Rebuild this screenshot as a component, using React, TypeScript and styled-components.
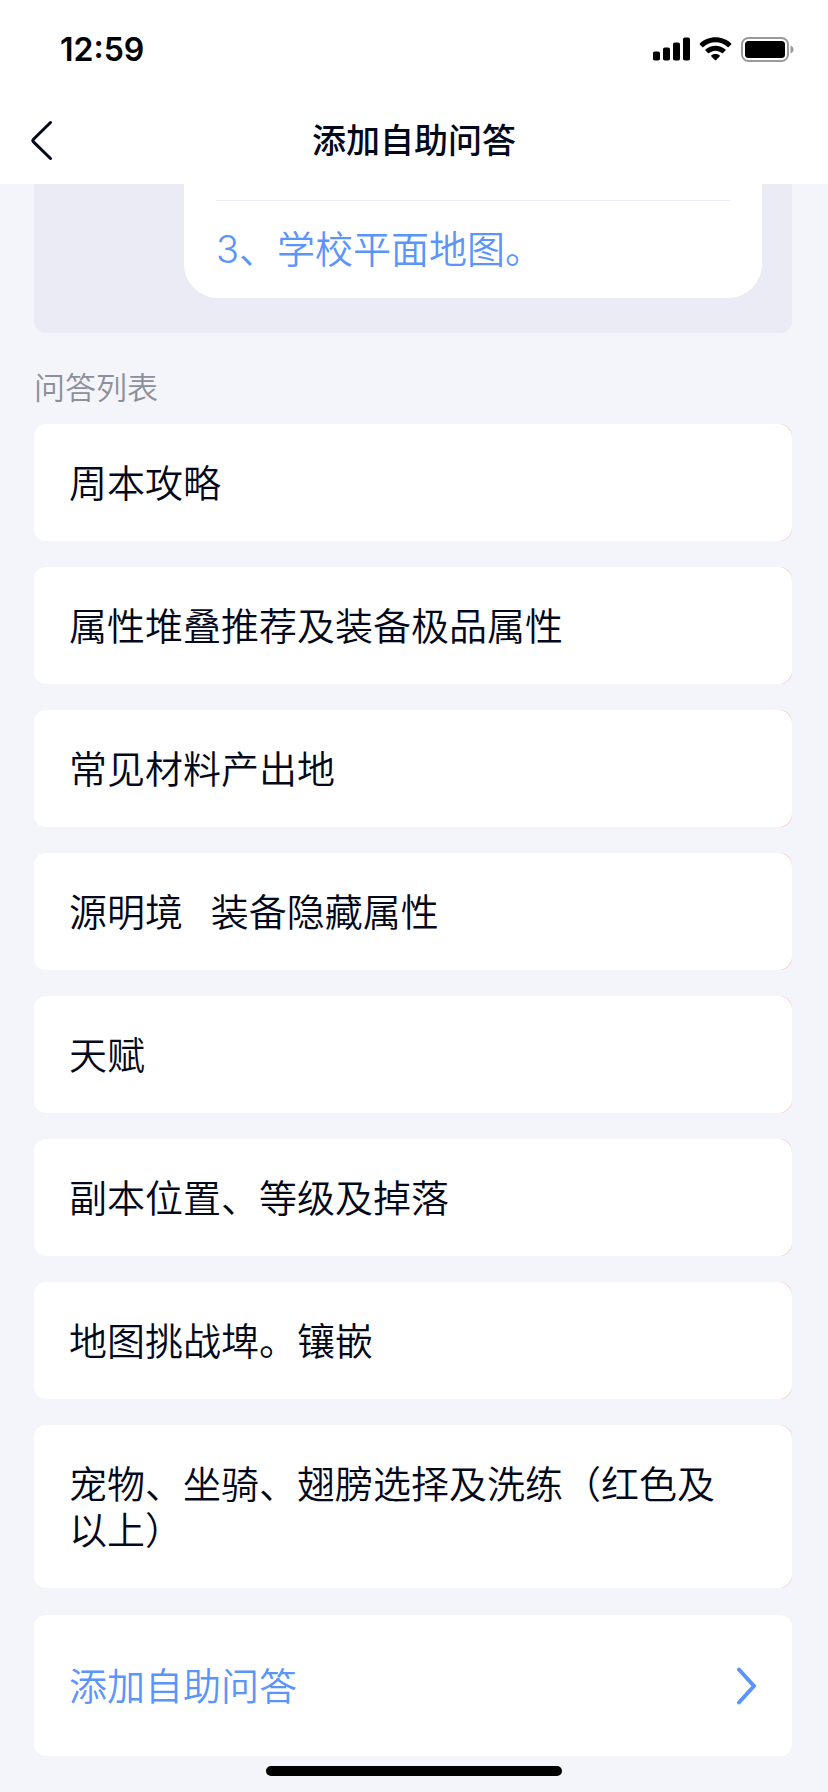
import React from "react";
import styled, { createGlobalStyle } from "styled-components";

const color = {
  page: "#f4f5fa",
  panel: "#ebebf5",
  surface: "#ffffff",
  text: "#03081a",
  muted: "#8c8f9c",
  link: "#5b95fc",
  danger: "#fbc9ce",
};

const cjk = `"Noto Sans CJK SC", sans-serif`;

const GlobalStyle = createGlobalStyle`
  *, *::before, *::after { box-sizing: border-box; }
  body {
    margin: 0;
    background: ${color.page};
    color: ${color.text};
    font-family: Inter, ${cjk};
    font-weight: 350;
  }
  button { border: 0; padding: 0; background: none; color: inherit; font: inherit; cursor: pointer; }
`;

const Page = styled.div`
  display: flex;
  flex-direction: column;
  min-height: 100vh;
`;

const Header = styled.header`
  position: sticky;
  top: 0;
  z-index: 1;
  background: ${color.surface};
`;

const StatusBar = styled.div`
  display: flex;
  align-items: center;
  justify-content: space-between;
  height: 98px;
  padding: 0 34px 0 60px;
`;

const Clock = styled.time`
  padding-top: 2px;
  font-size: 32px;
  line-height: 40px;
  font-weight: 600;
  color: #000;
`;

const StatusIcons = styled.div`
  display: flex;
  align-items: center;
  gap: 9px;
`;

const NavBar = styled.div`
  display: grid;
  grid-template-columns: 86px 1fr 86px;
  align-items: center;
  height: 86px;
`;

const BackButton = styled.button`
  display: flex;
  align-items: center;
  height: 84px;
  padding-left: 30px;
`;

const Title = styled.h1`
  margin: 0;
  font-size: 34px;
  line-height: 46px;
  font-weight: 500;
  text-align: center;
`;

const Content = styled.main`
  flex: 1;
  padding: 0 36px 36px 34px;
`;

const Preview = styled.section`
  padding: 0 30px 35px 150px;
  border-radius: 0 0 12px 12px;
  background: ${color.panel};
`;

const Bubble = styled.div`
  padding: 16px 32px 26px;
  border-radius: 0 0 34px 34px;
  background: ${color.surface};
`;

const PreviewLink = styled.a`
  display: block;
  padding-top: 25px;
  border-top: 1px solid ${color.panel};
  font-size: 38px;
  line-height: 46px;
  color: ${color.link};
  text-decoration: none;
`;

const SectionLabel = styled.h2`
  margin: 37px 0 18px;
  font-size: 31px;
  line-height: 36px;
  font-weight: 350;
  color: ${color.muted};
`;

const List = styled.ul`
  display: flex;
  flex-direction: column;
  gap: 26px;
  margin: 0 0 27px;
  padding: 0;
  list-style: none;
`;

/* The swipe action sits beneath the card and shows at its right corners. */
const Item = styled.li`
  border-radius: 12px;
  background: linear-gradient(to left, ${color.danger} 12px, transparent 12px);
`;

const ItemButton = styled.button`
  display: block;
  width: 100%;
  padding: 37px 70px 34px 35px;
  border-radius: 12px 14px 14px 12px;
  background: ${color.surface};
  font-family: Roboto, ${cjk};
  font-size: 38px;
  line-height: 46px;
  text-align: left;
  white-space: pre-wrap;
`;

const AddButton = styled.button`
  display: flex;
  align-items: center;
  justify-content: space-between;
  width: 100%;
  padding: 48px 35px 47px 35px;
  border-radius: 12px;
  background: ${color.surface};
  font-size: 38px;
  line-height: 46px;
  color: ${color.link};
`;

const HomeIndicator = styled.div`
  position: fixed;
  bottom: 16px;
  left: 50%;
  width: 296px;
  height: 10px;
  margin-left: -148px;
  border-radius: 5px;
  background: #000;
`;

const questions = [
  "周本攻略",
  "属性堆叠推荐及装备极品属性",
  "常见材料产出地",
  "源明境   装备隐藏属性",
  "天赋",
  "副本位置、等级及掉落",
  "地图挑战埤。镶嵌",
  "宠物、坐骑、翅膀选择及洗练（红色及以上）",
];

const SignalIcon = () => (
  <svg width="37" height="24" viewBox="0 0 37 24" aria-hidden="true">
    <rect x="0" y="14.5" width="7" height="9" rx="1.8" />
    <rect x="10" y="10.5" width="7" height="13" rx="1.8" />
    <rect x="20" y="5.5" width="7" height="18" rx="1.8" />
    <rect x="30" y="0.5" width="7" height="23" rx="1.8" />
  </svg>
);

const WifiIcon = () => (
  <svg width="33" height="24" viewBox="0 0 33 24" aria-hidden="true">
    <path d="M16.5 0.3C22.6 0.3 28.1 2.6 32.2 6.5c.3.3.3.8 0 1.1l-2.5 2.5c-.3.3-.8.3-1.1 0C25.4 7.100 21.100 5.300 16.500 5.300S7.600 7.100 4.400 10.100c-.3.3-.8.3-1.1 0L.8 7.600c-.3-.3-.3-.8 0-1.100C4.900 2.600 10.400.3 16.500.3Z" />
    <path d="M16.500 8.700c3.800 0 7.300 1.400 10 3.800.3.3.3.8 0 1.100L24 16.100c-.3.3-.8.3-1.100 0-1.700-1.500-4-2.400-6.400-2.400s-4.700.9-6.400 2.400c-.3.3-.8.3-1.100 0l-2.500-2.500c-.3-.3-.3-.8 0-1.100 2.700-2.400 6.200-3.800 10-3.800Z" />
    <path d="M16.500 16.900c1.600 0 3 .5 4.100 1.400.4.3.4.8 0 1.100l-3.500 3.700c-.3.4-.9.4-1.200 0l-3.500-3.700c-.4-.3-.4-.8 0-1.100 1.100-.9 2.500-1.400 4.100-1.400Z" />
  </svg>
);

const BatteryIcon = () => (
  <svg width="53" height="25" viewBox="0 0 53 25" aria-hidden="true">
    <rect x="1" y="1" width="46" height="23" rx="6.500" fill="none" stroke="#999" strokeWidth="2" />
    <rect x="4" y="4" width="40" height="17" rx="3.500" />
    <path d="M49.500 8.500c1.900.7 3 2.200 3 4s-1.100 3.300-3 4Z" fill="#999" />
  </svg>
);

const BackIcon = () => (
  <svg width="24" height="42" viewBox="0 0 24 42" fill="none" aria-hidden="true">
    <path
      d="M20.500 2.500 3.500 19.300q-1.300 1.300 0 2.600L20.500 38.500"
      stroke="currentColor"
      strokeWidth="3"
      strokeLinecap="round"
    />
  </svg>
);

const ForwardIcon = () => (
  <svg width="21" height="38" viewBox="0 0 21 38" fill="none" aria-hidden="true">
    <path
      d="M3 2.500 18 19 3 35.500"
      stroke="currentColor"
      strokeWidth="4"
      strokeLinecap="round"
      strokeLinejoin="round"
    />
  </svg>
);

export default function App() {
  return (
    <Page>
      <GlobalStyle />
      <Header>
        <StatusBar>
          <Clock>12:59</Clock>
          <StatusIcons>
            <SignalIcon />
            <WifiIcon />
            <BatteryIcon />
          </StatusIcons>
        </StatusBar>
        <NavBar>
          <BackButton type="button" aria-label="返回">
            <BackIcon />
          </BackButton>
          <Title>添加自助问答</Title>
        </NavBar>
      </Header>
      <Content>
        <Preview>
          <Bubble>
            <PreviewLink href="#map">3、学校平面地图。</PreviewLink>
          </Bubble>
        </Preview>
        <SectionLabel>问答列表</SectionLabel>
        <List>
          {questions.map((question) => (
            <Item key={question}>
              <ItemButton type="button">{question}</ItemButton>
            </Item>
          ))}
        </List>
        <AddButton type="button">
          添加自助问答
          <ForwardIcon />
        </AddButton>
      </Content>
      <HomeIndicator />
    </Page>
  );
}
